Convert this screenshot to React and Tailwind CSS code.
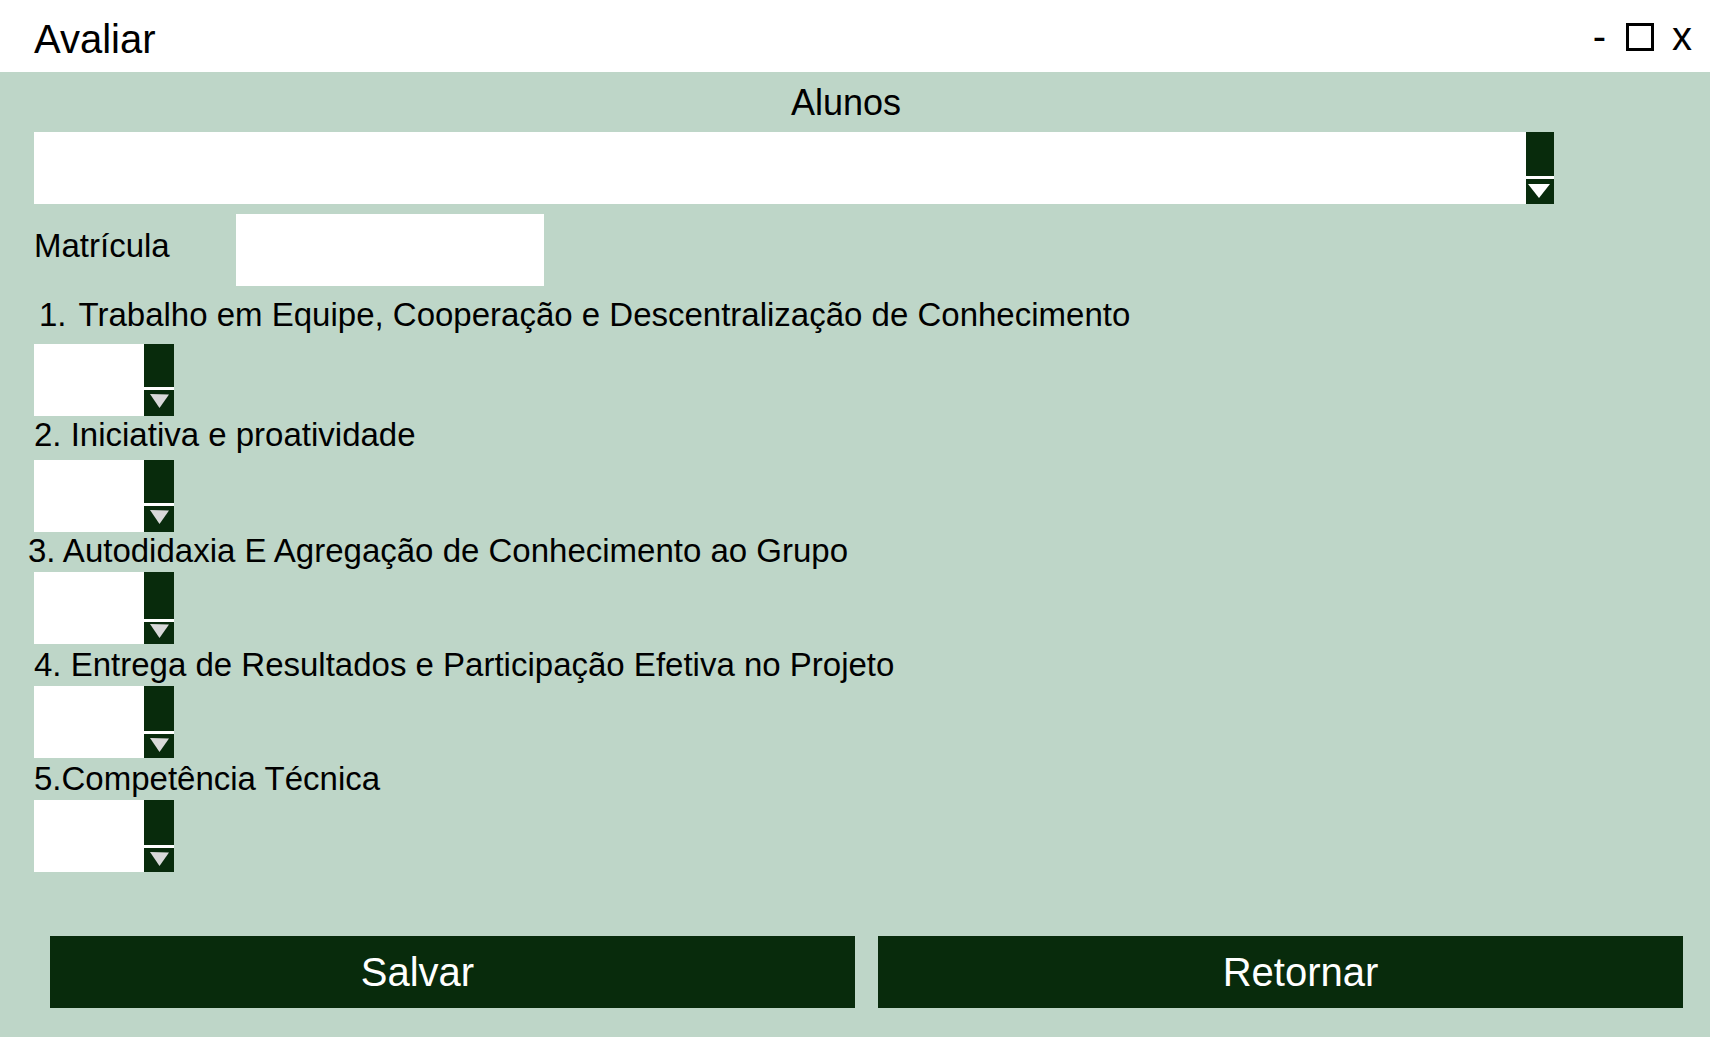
import React from "react";

const questions = [
  {
    id: "q1",
    number: "1.",
    text: "Trabalho em Equipe, Cooperação e Descentralização de Conhecimento",
    label: "gap-3 pt-[10px] pb-[10px] pl-[39px]",
    upper: "h-[43px]",
    arrow: "mt-1",
  },
  {
    id: "q2",
    number: "",
    text: "2. Iniciativa e proatividade",
    label: "pb-[6px] pl-[34px]",
    upper: "h-[43px]",
    arrow: "mt-1",
  },
  {
    id: "q3",
    number: "",
    text: "3. Autodidaxia E Agregação de Conhecimento ao Grupo",
    label: "pb-[2px] pl-[28px]",
    upper: "h-[47px]",
    arrow: "mt-[2px]",
  },
  {
    id: "q4",
    number: "",
    text: "4. Entrega de Resultados e Participação Efetiva no Projeto",
    label: "pt-[2px] pb-[2px] pl-[34px]",
    upper: "h-[45px]",
    arrow: "mt-1",
  },
  {
    id: "q5",
    number: "",
    text: "5.Competência Técnica",
    label: "pt-[2px] pb-[2px] pl-[34px]",
    upper: "h-[45px]",
    arrow: "mt-1",
  },
];

function Dropdown({ id, labelledBy, box, bar, upper, children }) {
  return (
    <div className={`relative h-[72px] ${box}`}>
      <select
        id={id}
        aria-labelledby={labelledBy}
        className="block h-full w-full appearance-none bg-white px-3 text-[33px] text-black outline-none"
      >
        <option value=""></option>
      </select>
      <div
        className={`pointer-events-none absolute inset-y-0 right-0 flex flex-col gap-[3px] bg-white ${bar}`}
      >
        <div className={`bg-[#082b0c] ${upper}`} />
        <div className="flex flex-1 justify-center bg-[#082b0c]">{children}</div>
      </div>
    </div>
  );
}

export default function App() {
  return (
    <div className="flex min-h-screen flex-col bg-[#bed6c8] font-['Liberation_Sans',Arial,sans-serif] text-black">
      <header className="flex h-[72px] items-center justify-between bg-white pr-[18px] pl-[34px] text-[40px] leading-[48px]">
        <h1 className="pt-[6px]">Avaliar</h1>
        <div className="flex items-center pt-[2px]">
          <button type="button" aria-label="Minimizar" className="mr-5 pb-[2px]">
            -
          </button>
          <button
            type="button"
            aria-label="Maximizar"
            className="mr-[18px] size-7 border-3 border-black"
          />
          <button type="button" aria-label="Fechar" className="pb-[2px]">
            x
          </button>
        </div>
      </header>

      <main className="flex flex-1 flex-col">
        <h2 id="alunos" className="pt-[2px] pr-[18px] text-center text-[36px] leading-[58px]">
          Alunos
        </h2>
        <Dropdown
          labelledBy="alunos"
          box="mr-[156px] ml-[34px]"
          bar="w-7"
          upper="h-[44px]"
        >
          <svg viewBox="0 0 22 14" className="mt-[5px] mr-[3px] h-[14px] w-[22px]" fill="#ffffff">
            <path d="M0 0H22L11 14Z" />
          </svg>
        </Dropdown>

        <div className="mt-[10px] flex items-center pl-[34px]">
          <label htmlFor="matricula" className="w-[202px] pb-2 text-[33px] leading-[38px]">
            Matrícula
          </label>
          <input
            id="matricula"
            type="text"
            className="h-[72px] w-[308px] bg-white px-3 text-[33px] outline-none"
          />
        </div>

        {questions.map((q) => (
          <div key={q.id}>
            <label htmlFor={q.id} className={`flex text-[33px] leading-[38px] ${q.label}`}>
              {q.number && <span>{q.number}</span>}
              <span>{q.text}</span>
            </label>
            <Dropdown id={q.id} box="ml-[34px] w-[140px]" bar="w-[30px]" upper={q.upper}>
              <svg viewBox="0 0 19 14" className={`h-[14px] w-[19px] ${q.arrow}`} fill="#d9d9d9">
                <path d="M0 0L19 0.4L9.5 14Z" />
              </svg>
            </Dropdown>
          </div>
        ))}

        <div className="mt-16 mb-7 grid grid-cols-2 gap-[23px] pr-[27px] pl-[50px] text-[40px] text-white">
          <button type="button" className="h-[72px] bg-[#082b0c] pr-[70px]">
            Salvar
          </button>
          <button type="button" className="h-[72px] bg-[#082b0c] pl-10">
            Retornar
          </button>
        </div>
      </main>
    </div>
  );
}
